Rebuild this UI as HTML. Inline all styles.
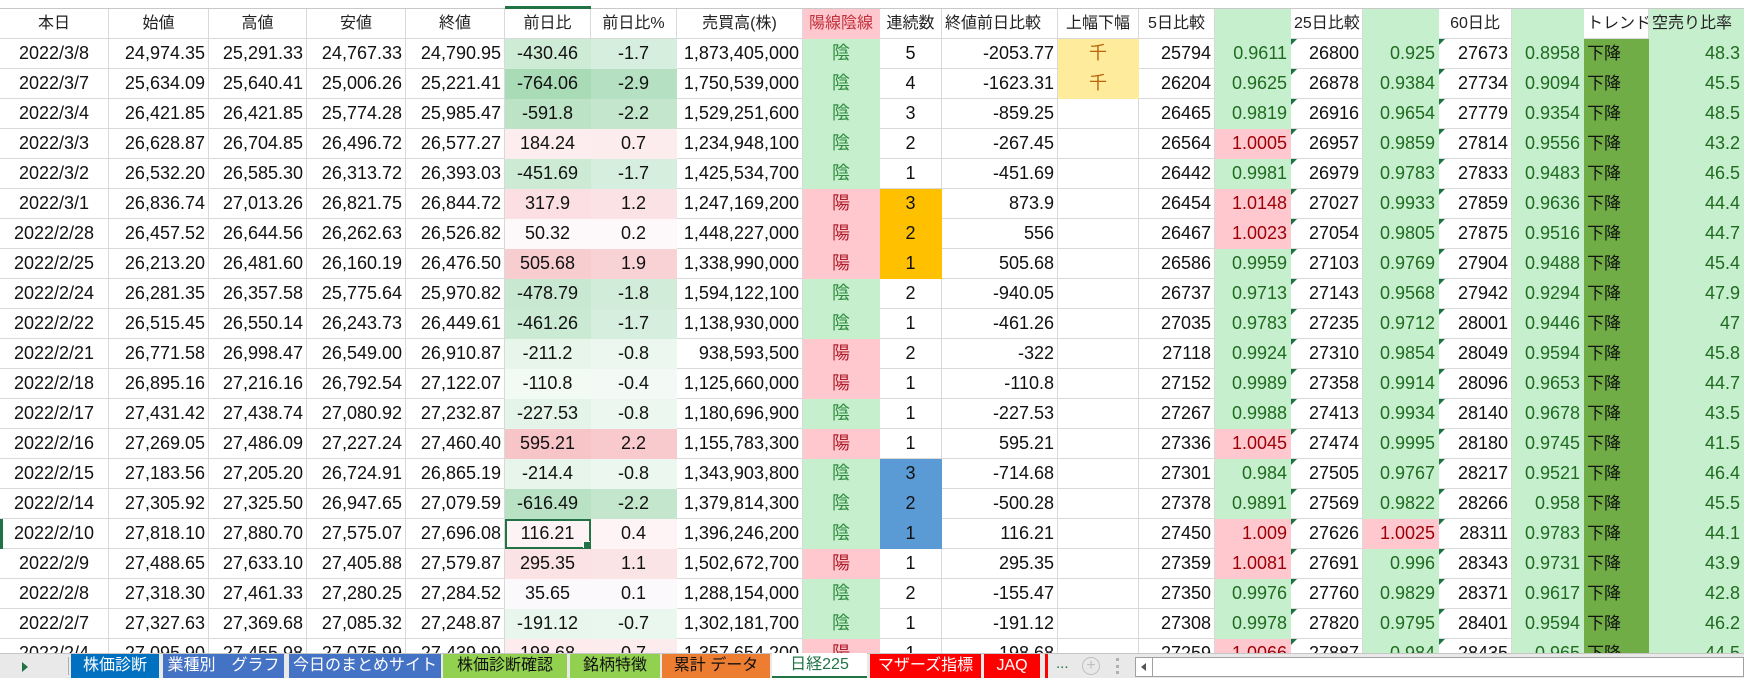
<!DOCTYPE html>
<html><head><meta charset="utf-8">
<style>
*{margin:0;padding:0;box-sizing:border-box}
body{width:1744px;height:678px;overflow:hidden;background:#fff;font-family:"Liberation Sans","Noto Sans CJK JP",sans-serif;position:relative}
#grid{position:absolute;left:0;top:0;width:1744px;height:653px;overflow:hidden;border-top:4px solid #fff}
#topline{position:absolute;left:0;top:4px;width:1744px;height:1px;background:#c8c8c8}
table{border-collapse:separate;border-spacing:0;table-layout:fixed;width:1744px;position:absolute;top:5px;left:0}
td{height:30px;border-right:1px solid #d9d9d9;border-bottom:1px solid #d9d9d9;font-size:18px;color:#111;white-space:nowrap;overflow:hidden;padding:0 3px;text-align:right;position:relative;line-height:29px}
tr.h td{height:29px;font-size:16px;text-align:center;color:#222}
td.c{text-align:center}
td.l{text-align:left}
.yin{background:#c6efce;color:#2f8a3f;border-color:#c6efce}
.yang{background:#ffc7ce;color:#b0202c;border-color:#ffc7ce}
.g{background:#c6efce;color:#1f6b1f;border-color:#c6efce}
.r{background:#ffc7ce;color:#9c0006;border-color:#ffc7ce}
.tr{background:#70ad47;border-color:#70ad47;color:#111;text-align:left;font-size:17px}
.t{background:#c6efce;border-color:#c6efce;color:#1f6b1f}
.or{background:#ffc000;border-color:#ffc000}
.bl{background:#5b9bd5;border-color:#5b9bd5}
.ye{background:#ffeb9c;border-color:#ffeb9c;color:#b8650a;text-align:center}
.tri::before{content:"";position:absolute;left:0;top:0;border-top:6px solid #1e7145;border-right:6px solid transparent}
.sel{outline:2px solid #217346;outline-offset:-2px}
.sel::after{content:"";position:absolute;right:-1px;bottom:-1px;width:6px;height:6px;background:#217346;border:1px solid #fff}
#tabs{position:absolute;left:0;top:653px;width:1744px;height:25px;background:#e9e9e9;border-top:1px solid #c6c6c6}
.tab{position:absolute;top:0;height:24px;font-size:16px;line-height:23px;text-align:center;color:#fff;font-family:"Liberation Sans","Noto Sans CJK JP",sans-serif;white-space:nowrap;overflow:hidden}
</style></head><body>
<div id="grid">
<div id="topline"></div>
<div style="position:absolute;left:505px;top:2px;width:86px;height:3px;background:#217346"></div>
<table>
<colgroup><col style="width:109px"><col style="width:100px"><col style="width:98px"><col style="width:99px"><col style="width:99px"><col style="width:86px"><col style="width:86px"><col style="width:126px"><col style="width:77px"><col style="width:62px"><col style="width:116px"><col style="width:81px"><col style="width:76px"><col style="width:76px"><col style="width:72px"><col style="width:76px"><col style="width:73px"><col style="width:72px"><col style="width:65px"><col style="width:95px"></colgroup>
<tr class="h"><td>本日</td><td>始値</td><td>高値</td><td>安値</td><td>終値</td><td>前日比</td><td>前日比%</td><td>売買高(株)</td><td class="yang" style="color:#c0303a">陽線陰線</td><td>連続数</td><td style="text-align:left;padding-left:3px">終値前日比較</td><td>上幅下幅</td><td class="l">5日比較</td><td class="g"></td><td class="l" style="overflow:visible">25日比較</td><td class="g"></td><td class="l">60日比</td><td class="g"></td><td class="l">トレンド</td><td class="t" style="text-align:left">空売り比率</td></tr>

<tr><td class="c">2022/3/8</td><td>24,974.35</td><td>25,291.33</td><td>24,767.33</td><td>24,790.95</td><td class="c" style="background:#ceebd6;border-color:#ceebd6">-430.46</td><td class="c" style="background:#d6eedd;border-color:#d6eedd">-1.7</td><td>1,873,405,000</td><td class="c yin">陰</td><td class="c">5</td><td>-2053.77</td><td class="ye">千</td><td>25794</td><td class="g">0.9611</td><td class="tri">26800</td><td class="g">0.925</td><td class="tri">27673</td><td class="g">0.8958</td><td class="tr">下降</td><td class="t">48.3</td></tr>
<tr><td class="c">2022/3/7</td><td>25,634.09</td><td>25,640.41</td><td>25,006.26</td><td>25,221.41</td><td class="c" style="background:#a8dbb6;border-color:#a8dbb6">-764.06</td><td class="c" style="background:#b5e0c1;border-color:#b5e0c1">-2.9</td><td>1,750,539,000</td><td class="c yin">陰</td><td class="c">4</td><td>-1623.31</td><td class="ye">千</td><td>26204</td><td class="g">0.9625</td><td class="tri">26878</td><td class="g">0.9384</td><td class="tri">27734</td><td class="g">0.9094</td><td class="tr">下降</td><td class="t">45.5</td></tr>
<tr><td class="c">2022/3/4</td><td>26,421.85</td><td>26,421.85</td><td>25,774.28</td><td>25,985.47</td><td class="c" style="background:#bce3c6;border-color:#bce3c6">-591.8</td><td class="c" style="background:#c3e6cd;border-color:#c3e6cd">-2.2</td><td>1,529,251,600</td><td class="c yin">陰</td><td class="c">3</td><td>-859.25</td><td></td><td>26465</td><td class="g">0.9819</td><td class="tri">26916</td><td class="g">0.9654</td><td class="tri">27779</td><td class="g">0.9354</td><td class="tr">下降</td><td class="t">48.5</td></tr>
<tr><td class="c">2022/3/3</td><td>26,628.87</td><td>26,704.85</td><td>26,496.72</td><td>26,577.27</td><td class="c" style="background:#fdedee;border-color:#fdedee">184.24</td><td class="c" style="background:#fdeced;border-color:#fdeced">0.7</td><td>1,234,948,100</td><td class="c yin">陰</td><td class="c">2</td><td>-267.45</td><td></td><td>26564</td><td class="r">1.0005</td><td class="tri">26957</td><td class="g">0.9859</td><td class="tri">27814</td><td class="g">0.9556</td><td class="tr">下降</td><td class="t">43.2</td></tr>
<tr><td class="c">2022/3/2</td><td>26,532.20</td><td>26,585.30</td><td>26,313.72</td><td>26,393.03</td><td class="c" style="background:#ccead4;border-color:#ccead4">-451.69</td><td class="c" style="background:#d6eedd;border-color:#d6eedd">-1.7</td><td>1,425,534,700</td><td class="c yin">陰</td><td class="c">1</td><td>-451.69</td><td></td><td>26442</td><td class="g">0.9981</td><td class="tri">26979</td><td class="g">0.9783</td><td class="tri">27833</td><td class="g">0.9483</td><td class="tr">下降</td><td class="t">46.5</td></tr>
<tr><td class="c">2022/3/1</td><td>26,836.74</td><td>27,013.26</td><td>26,821.75</td><td>26,844.72</td><td class="c" style="background:#fbdfe2;border-color:#fbdfe2">317.9</td><td class="c" style="background:#fbe3e5;border-color:#fbe3e5">1.2</td><td>1,247,169,200</td><td class="c yang">陽</td><td class="c or">3</td><td>873.9</td><td></td><td>26454</td><td class="r">1.0148</td><td class="tri">27027</td><td class="g">0.9933</td><td class="tri">27859</td><td class="g">0.9636</td><td class="tr">下降</td><td class="t">44.4</td></tr>
<tr><td class="c">2022/2/28</td><td>26,457.52</td><td>26,644.56</td><td>26,262.63</td><td>26,526.82</td><td class="c" style="background:#fdf8fa;border-color:#fdf8fa">50.32</td><td class="c" style="background:#fdf8fa;border-color:#fdf8fa">0.2</td><td>1,448,227,000</td><td class="c yang">陽</td><td class="c or">2</td><td>556</td><td></td><td>26467</td><td class="r">1.0023</td><td class="tri">27054</td><td class="g">0.9805</td><td class="tri">27875</td><td class="g">0.9516</td><td class="tr">下降</td><td class="t">44.7</td></tr>
<tr><td class="c">2022/2/25</td><td>26,213.20</td><td>26,481.60</td><td>26,160.19</td><td>26,476.50</td><td class="c" style="background:#f8cdd0;border-color:#f8cdd0">505.68</td><td class="c" style="background:#f9d2d5;border-color:#f9d2d5">1.9</td><td>1,338,990,000</td><td class="c yang">陽</td><td class="c or">1</td><td>505.68</td><td></td><td>26586</td><td class="g">0.9959</td><td class="tri">27103</td><td class="g">0.9769</td><td class="tri">27904</td><td class="g">0.9488</td><td class="tr">下降</td><td class="t">45.4</td></tr>
<tr><td class="c">2022/2/24</td><td>26,281.35</td><td>26,357.58</td><td>25,775.64</td><td>25,970.82</td><td class="c" style="background:#c8e8d1;border-color:#c8e8d1">-478.79</td><td class="c" style="background:#d2ecda;border-color:#d2ecda">-1.8</td><td>1,594,122,100</td><td class="c yin">陰</td><td class="c">2</td><td>-940.05</td><td></td><td>26737</td><td class="g">0.9713</td><td class="tri">27143</td><td class="g">0.9568</td><td class="tri">27942</td><td class="g">0.9294</td><td class="tr">下降</td><td class="t">47.9</td></tr>
<tr><td class="c">2022/2/22</td><td>26,515.45</td><td>26,550.14</td><td>26,243.73</td><td>26,449.61</td><td class="c" style="background:#caead3;border-color:#caead3">-461.26</td><td class="c" style="background:#d6eedd;border-color:#d6eedd">-1.7</td><td>1,138,930,000</td><td class="c yin">陰</td><td class="c">1</td><td>-461.26</td><td></td><td>27035</td><td class="g">0.9783</td><td class="tri">27235</td><td class="g">0.9712</td><td class="tri">28001</td><td class="g">0.9446</td><td class="tr">下降</td><td class="t">47</td></tr>
<tr><td class="c">2022/2/21</td><td>26,771.58</td><td>26,998.47</td><td>26,549.00</td><td>26,910.87</td><td class="c" style="background:#e7f5eb;border-color:#e7f5eb">-211.2</td><td class="c" style="background:#ebf7ef;border-color:#ebf7ef">-0.8</td><td>938,593,500</td><td class="c yang">陽</td><td class="c">2</td><td>-322</td><td></td><td>27118</td><td class="g">0.9924</td><td class="tri">27310</td><td class="g">0.9854</td><td class="tri">28049</td><td class="g">0.9594</td><td class="tr">下降</td><td class="t">45.8</td></tr>
<tr><td class="c">2022/2/18</td><td>26,895.16</td><td>27,216.16</td><td>26,792.54</td><td>27,122.07</td><td class="c" style="background:#f2faf4;border-color:#f2faf4">-110.8</td><td class="c" style="background:#f3faf5;border-color:#f3faf5">-0.4</td><td>1,125,660,000</td><td class="c yang">陽</td><td class="c">1</td><td>-110.8</td><td></td><td>27152</td><td class="g">0.9989</td><td class="tri">27358</td><td class="g">0.9914</td><td class="tri">28096</td><td class="g">0.9653</td><td class="tr">下降</td><td class="t">44.7</td></tr>
<tr><td class="c">2022/2/17</td><td>27,431.42</td><td>27,438.74</td><td>27,080.92</td><td>27,232.87</td><td class="c" style="background:#e5f4e9;border-color:#e5f4e9">-227.53</td><td class="c" style="background:#ebf7ef;border-color:#ebf7ef">-0.8</td><td>1,180,696,900</td><td class="c yin">陰</td><td class="c">1</td><td>-227.53</td><td></td><td>27267</td><td class="g">0.9988</td><td class="tri">27413</td><td class="g">0.9934</td><td class="tri">28140</td><td class="g">0.9678</td><td class="tr">下降</td><td class="t">43.5</td></tr>
<tr><td class="c">2022/2/16</td><td>27,269.05</td><td>27,486.09</td><td>27,227.24</td><td>27,460.40</td><td class="c" style="background:#f7c4c8;border-color:#f7c4c8">595.21</td><td class="c" style="background:#f8cacd;border-color:#f8cacd">2.2</td><td>1,155,783,300</td><td class="c yang">陽</td><td class="c">1</td><td>595.21</td><td></td><td>27336</td><td class="r">1.0045</td><td class="tri">27474</td><td class="g">0.9995</td><td class="tri">28180</td><td class="g">0.9745</td><td class="tr">下降</td><td class="t">41.5</td></tr>
<tr><td class="c">2022/2/15</td><td>27,183.56</td><td>27,205.20</td><td>26,724.91</td><td>26,865.19</td><td class="c" style="background:#e7f5eb;border-color:#e7f5eb">-214.4</td><td class="c" style="background:#ebf7ef;border-color:#ebf7ef">-0.8</td><td>1,343,903,800</td><td class="c yin">陰</td><td class="c bl">3</td><td>-714.68</td><td></td><td>27301</td><td class="g">0.984</td><td class="tri">27505</td><td class="g">0.9767</td><td class="tri">28217</td><td class="g">0.9521</td><td class="tr">下降</td><td class="t">46.4</td></tr>
<tr><td class="c">2022/2/14</td><td>27,305.92</td><td>27,325.50</td><td>26,947.65</td><td>27,079.59</td><td class="c" style="background:#b9e2c4;border-color:#b9e2c4">-616.49</td><td class="c" style="background:#c3e6cd;border-color:#c3e6cd">-2.2</td><td>1,379,814,300</td><td class="c yin">陰</td><td class="c bl">2</td><td>-500.28</td><td></td><td>27378</td><td class="g">0.9891</td><td class="tri">27569</td><td class="g">0.9822</td><td class="tri">28266</td><td class="g">0.958</td><td class="tr">下降</td><td class="t">45.5</td></tr>
<tr><td class="c">2022/2/10</td><td>27,818.10</td><td>27,880.70</td><td>27,575.07</td><td>27,696.08</td><td class="c sel" style="background:#fef3f4;border-color:#fef3f4">116.21</td><td class="c" style="background:#fef4f5;border-color:#fef4f5">0.4</td><td>1,396,246,200</td><td class="c yin">陰</td><td class="c bl">1</td><td>116.21</td><td></td><td>27450</td><td class="r">1.009</td><td class="tri">27626</td><td class="r">1.0025</td><td class="tri">28311</td><td class="g">0.9783</td><td class="tr">下降</td><td class="t">44.1</td></tr>
<tr><td class="c">2022/2/9</td><td>27,488.65</td><td>27,633.10</td><td>27,405.88</td><td>27,579.87</td><td class="c" style="background:#fbe2e4;border-color:#fbe2e4">295.35</td><td class="c" style="background:#fbe4e6;border-color:#fbe4e6">1.1</td><td>1,502,672,700</td><td class="c yang">陽</td><td class="c">1</td><td>295.35</td><td></td><td>27359</td><td class="r">1.0081</td><td class="tri">27691</td><td class="g">0.996</td><td class="tri">28343</td><td class="g">0.9731</td><td class="tr">下降</td><td class="t">43.9</td></tr>
<tr><td class="c">2022/2/8</td><td>27,318.30</td><td>27,461.33</td><td>27,280.25</td><td>27,284.52</td><td class="c" style="background:#fcf9fc;border-color:#fcf9fc">35.65</td><td class="c" style="background:#fcf9fc;border-color:#fcf9fc">0.1</td><td>1,288,154,000</td><td class="c yin">陰</td><td class="c">2</td><td>-155.47</td><td></td><td>27350</td><td class="g">0.9976</td><td class="tri">27760</td><td class="g">0.9829</td><td class="tri">28371</td><td class="g">0.9617</td><td class="tr">下降</td><td class="t">42.8</td></tr>
<tr><td class="c">2022/2/7</td><td>27,327.63</td><td>27,369.68</td><td>27,085.32</td><td>27,248.87</td><td class="c" style="background:#e9f6ed;border-color:#e9f6ed">-191.12</td><td class="c" style="background:#eaf7ee;border-color:#eaf7ee">-0.7</td><td>1,302,181,700</td><td class="c yin">陰</td><td class="c">1</td><td>-191.12</td><td></td><td>27308</td><td class="g">0.9978</td><td class="tri">27820</td><td class="g">0.9795</td><td class="tri">28401</td><td class="g">0.9594</td><td class="tr">下降</td><td class="t">46.2</td></tr>
<tr><td class="c">2022/2/4</td><td>27,095.90</td><td>27,455.98</td><td>27,075.99</td><td>27,439.99</td><td class="c" style="background:#fdebed;border-color:#fdebed">198.68</td><td class="c" style="background:#fdeced;border-color:#fdeced">0.7</td><td>1,357,654,200</td><td class="c yang">陽</td><td class="c">1</td><td>198.68</td><td></td><td>27259</td><td class="r">1.0066</td><td class="tri">27887</td><td class="g">0.984</td><td class="tri">28435</td><td class="g">0.965</td><td class="tr">下降</td><td class="t">44.5</td></tr>
</table>
<div style="position:absolute;left:0;top:515px;width:3px;height:30px;background:#217346"></div>
</div>
<div id="tabs">
<div style="position:absolute;left:22px;top:8px;border-left:6px solid #217346;border-top:5px solid transparent;border-bottom:5px solid transparent"></div>
<div style="position:absolute;left:68px;top:3px;width:1px;height:18px;background:#b0b0b0"></div>
<div class="tab" style="left:71px;width:88px;background:#0070c0">株価診断</div>
<div class="tab" style="left:163px;width:121px;background:#4472c4">業種別　グラフ</div>
<div class="tab" style="left:289px;width:152px;background:#4472c4">今日のまとめサイト</div>
<div class="tab" style="left:443px;width:124px;background:#92d050;color:#111">株価診断確認</div>
<div class="tab" style="left:570px;width:90px;background:#92d050;color:#111">銘柄特徴</div>
<div class="tab" style="left:662px;width:108px;background:#ed7d31;color:#111">累計 データ</div>
<div class="tab" style="left:772px;width:95px;background:#fff;color:#217346;border-bottom:2px solid #217346;height:25px;top:-1px">日経225</div>
<div class="tab" style="left:870px;width:111px;background:#ff0000">マザーズ指標</div>
<div class="tab" style="left:984px;width:56px;background:#ff0000">JAQ</div>
<div style="position:absolute;left:1045px;top:0;width:3px;height:24px;background:#ff0000"></div>
<div style="position:absolute;left:1056px;top:1px;font-size:15px;color:#217346">...</div>
<div style="position:absolute;left:1082px;top:3px;width:18px;height:18px;border:1px solid #c0c0c0;border-radius:50%;color:#c0c0c0;font-size:16px;line-height:15px;text-align:center">+</div>
<div style="position:absolute;left:1116px;top:4px;width:3px;height:16px;border-left:3px dotted #b0b0b0"></div>
<div style="position:absolute;left:1135px;top:3px;width:609px;height:20px;background:#fff;border:1px solid #a0a0a0"></div>
<div style="position:absolute;left:1135px;top:3px;width:18px;height:20px;border-right:1px solid #a0a0a0"></div>
<div style="position:absolute;left:1141px;top:9px;border-right:5px solid #555;border-top:4px solid transparent;border-bottom:4px solid transparent"></div>
</div>
</body></html>
